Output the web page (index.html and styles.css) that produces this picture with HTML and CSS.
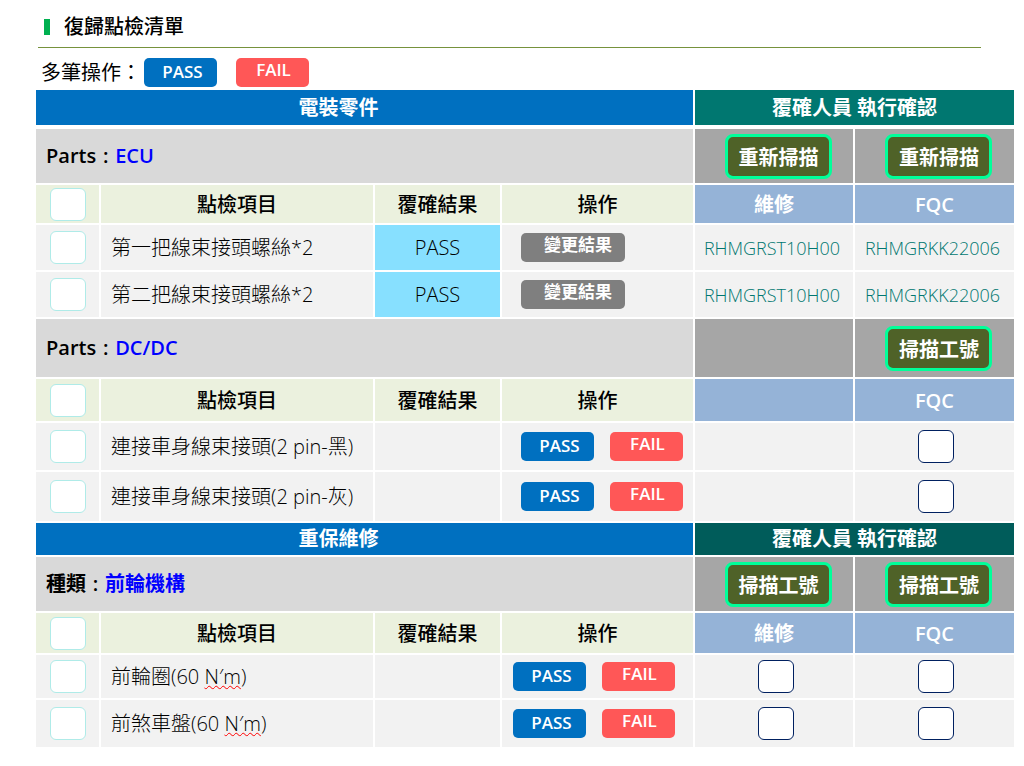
FILE: index.html
```html
<!DOCTYPE html>
<html lang="zh-Hant">
<head>
<meta charset="utf-8">
<title>復歸點檢清單</title>
<link rel="stylesheet" href="styles.css">
</head>
<body>
<header class="page-title"><h1>復歸點檢清單</h1></header>
<main>
  <div class="toolbar">
    <span class="toolbar-label">多筆操作：</span>
    <button class="btn pass" type="button">PASS</button>
    <button class="btn fail" type="button">FAIL</button>
  </div>
  <table class="checklist">
    <colgroup><col class="c-check"><col><col class="c-result"><col class="c-action"><col class="c-sign"><col class="c-sign"></colgroup>
    <tbody>
      <tr class="group first"><th colspan="4" class="parts">電裝零件</th><th colspan="2" class="confirm">覆確人員 執行確認</th></tr>
      <tr class="section"><th colspan="4">Parts<span class="colon">:</span><span class="name">ECU</span></th><td><button class="scan" type="button">重新掃描</button></td><td><button class="scan" type="button">重新掃描</button></td></tr>
      <tr class="head"><td><input type="checkbox" aria-label="全選 ECU"></td><th>點檢項目</th><th>覆確結果</th><th>操作</th><th class="role">維修</th><th class="role">FQC</th></tr>
      <tr class="item h47"><td><input type="checkbox" aria-label="第一把線束接頭螺絲"></td><td class="text">第一把線束接頭螺絲*2</td><td class="result">PASS</td><td class="actions"><button class="btn change" type="button">變更結果</button></td><td class="id">RHMGRST10H00</td><td class="id">RHMGRKK22006</td></tr>
      <tr class="item h47"><td><input type="checkbox" aria-label="第二把線束接頭螺絲"></td><td class="text">第二把線束接頭螺絲*2</td><td class="result">PASS</td><td class="actions"><button class="btn change" type="button">變更結果</button></td><td class="id">RHMGRST10H00</td><td class="id">RHMGRKK22006</td></tr>
      <tr class="section tall"><th colspan="4">Parts<span class="colon">:</span><span class="name">DC/DC</span></th><td></td><td><button class="scan" type="button">掃描工號</button></td></tr>
      <tr class="head h44"><td><input type="checkbox" aria-label="全選 DC/DC"></td><th>點檢項目</th><th>覆確結果</th><th>操作</th><th class="role"></th><th class="role">FQC</th></tr>
      <tr class="item h49"><td><input type="checkbox" aria-label="連接車身線束接頭 黑"></td><td class="text">連接車身線束接頭(2 pin-黑)</td><td></td><td class="actions"><div class="pair"><button class="btn pass" type="button">PASS</button><button class="btn fail" type="button">FAIL</button></div></td><td></td><td class="sign"><input type="checkbox" aria-label="FQC 確認 黑"></td></tr>
      <tr class="item h51"><td><input type="checkbox" aria-label="連接車身線束接頭 灰"></td><td class="text">連接車身線束接頭(2 pin-灰)</td><td></td><td class="actions"><div class="pair"><button class="btn pass" type="button">PASS</button><button class="btn fail" type="button">FAIL</button></div></td><td></td><td class="sign"><input type="checkbox" aria-label="FQC 確認 灰"></td></tr>
    </tbody>
    <tbody class="repair">
      <tr class="group"><th colspan="4" class="parts">重保維修</th><th colspan="2" class="confirm">覆確人員 執行確認</th></tr>
      <tr class="section"><th colspan="4">種類<span class="colon">:</span><span class="name">前輪機構</span></th><td><button class="scan" type="button">掃描工號</button></td><td><button class="scan" type="button">掃描工號</button></td></tr>
      <tr class="head h42"><td><input type="checkbox" aria-label="全選 前輪機構"></td><th>點檢項目</th><th>覆確結果</th><th>操作</th><th class="role">維修</th><th class="role">FQC</th></tr>
      <tr class="item h45"><td><input type="checkbox" aria-label="前輪圈"></td><td class="text">前輪圈(60 <span class="spell">N′m</span>)</td><td></td><td class="actions"><div class="pair"><button class="btn pass" type="button">PASS</button><button class="btn fail" type="button">FAIL</button></div></td><td class="sign"><input type="checkbox" aria-label="維修 確認 前輪圈"></td><td class="sign"><input type="checkbox" aria-label="FQC 確認 前輪圈"></td></tr>
      <tr class="item h49"><td><input type="checkbox" aria-label="前煞車盤"></td><td class="text">前煞車盤(60 <span class="spell">N′m</span>)</td><td></td><td class="actions"><div class="pair"><button class="btn pass" type="button">PASS</button><button class="btn fail" type="button">FAIL</button></div></td><td class="sign"><input type="checkbox" aria-label="維修 確認 前煞車盤"></td><td class="sign"><input type="checkbox" aria-label="FQC 確認 前煞車盤"></td></tr>
    </tbody>
  </table>
</main>
</body>
</html>
```
FILE: styles.css
```css
* { box-sizing: border-box; }
body {
  margin: 0;
  background: #fff;
  color: #000;
  font: 300 20px/28px "Open Sans", "Noto Sans CJK TC", sans-serif;
}
button { font-family: inherit; }
.page-title {
  display: flex;
  align-items: center;
  height: 48px;
  margin: 0 43px 0 38px;
  padding: 6px 6px 0;
  border-bottom: 1px solid #76923c;
}
.page-title::before {
  content: "";
  width: 6px;
  height: 16px;
  margin-right: 14px;
  background: #00b050;
}
h1 { margin: 0; font-size: 20px; font-weight: 500; }
main { padding: 0 9px 18px 36px; }
.toolbar {
  display: flex;
  align-items: center;
  height: 42px;
  padding: 7px 5px 0;
}
.toolbar-label { width: 103px; white-space: nowrap; font-weight: 400; }
.toolbar .fail { margin-left: 19px; }
.btn {
  width: 73px;
  height: 29px;
  padding: 0 0 2px 4px;
  border: 0;
  border-radius: 5px;
  color: #fff;
  font-size: 17px;
  font-weight: 600;
  line-height: 24px;
}
.pass { background: #0070c0; }
.fail { padding: 0 0 5px 2px; background: #ff5757; }
.change { width: 104px; padding: 0 0 5px 10px; background: #7f7f7f; font-weight: 700; }

.checklist {
  width: 100%;
  table-layout: fixed;
  border-collapse: separate;
  border-spacing: 0;
}
.c-check { width: 65px; }
.c-result { width: 127px; }
.c-action { width: 193px; }
.c-sign { width: 160px; }
th, td {
  padding: 0;
  border: solid #fff;
  border-width: 0 2px 2px 0;
  text-align: center;
  vertical-align: middle;
}
tr > :last-child { border-right-width: 1px; }
th { font-weight: 500; }
.group { height: 34px; }
.group th { background: #0070c0; color: #fff; font-weight: 700; }
.group .parts { padding-right: 52px; }
.group .confirm { background: #007770; }
.first { height: 39px; }
.first th { border-bottom-width: 4px; }
.repair .group .confirm { background: #005c5a; }

.section { height: 56px; }
.tall { height: 60px; }
.section th { padding-left: 10px; background: #d9d9d9; text-align: left; font-weight: 600; }
.section td { padding-left: 9px; background: #a6a6a6; }
.colon { display: inline-block; width: 19px; text-align: center; }
.name { color: #00f; }
.scan {
  display: block;
  width: 107px;
  height: 45px;
  margin: 0 auto;
  padding: 0;
  border: 3px solid #00ff99;
  border-radius: 8px;
  background: #4f6228;
  color: #fff;
  font-size: 20px;
  font-weight: 700;
}
.head { height: 40px; }
.head td, .head th { background: #ebf1de; }
.head th { padding-top: 2px; }
.head .role { background: #95b3d7; color: #fff; font-weight: 600; }
.item td { background: #f2f2f2; }
.h42 { height: 42px; }
.h44 { height: 44px; }
.h45 { height: 45px; }
.h47 { height: 47px; }
.h49 { height: 49px; }
.h51 { height: 51px; }
.item .text { padding-left: 10px; text-align: left; }
.item .result { background: #87e0ff; }
.item .id { padding-right: 4px; color: #007770; font-size: 18px; }
.item .actions { padding-left: 19px; text-align: left; }
.actions .btn { display: block; }
.actions .pair { display: flex; gap: 16px; }
.repair .item .actions { padding-left: 11px; }
.sign { padding-left: 4px; }
input {
  appearance: none;
  display: block;
  width: 36px;
  height: 33px;
  margin: 0 auto;
  border: 1px solid #afebe8;
  border-radius: 6px;
  background: #fff;
}
.sign input { border-color: #002060; }
.spell {
  text-decoration: underline wavy #f00 1px;
  text-decoration-skip-ink: none;
}
```
